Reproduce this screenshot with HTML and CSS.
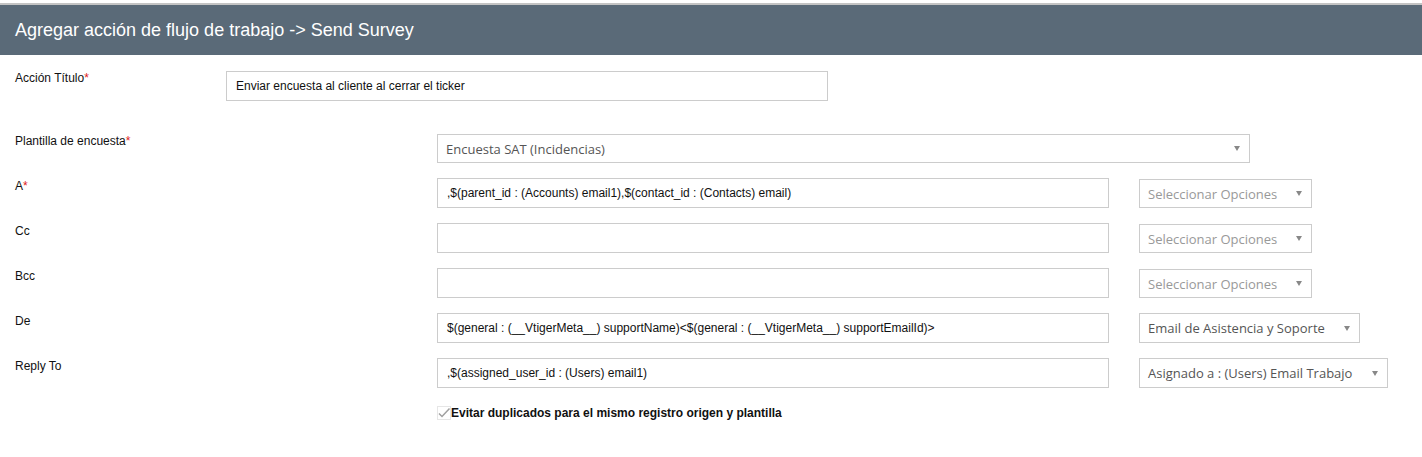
FILE: index.html
```html
<!DOCTYPE html>
<html lang="es">
<head>
<meta charset="utf-8">
<title>Agregar acción de flujo de trabajo</title>
<link rel="stylesheet" href="styles.css">
</head>
<body>
<div class="topline"></div>
<div class="header">Agregar acción de flujo de trabajo -&gt; Send Survey</div>
<div class="form">
  <div class="row row-title">
    <div class="label label-short">Acción Título<span class="req">*</span></div>
    <div class="input input-title">Enviar encuesta al cliente al cerrar el ticker</div>
  </div>

  <div class="row row-tpl">
    <div class="label">Plantilla de encuesta<span class="req">*</span></div>
    <div class="select select-tpl"><span class="sel-text">Encuesta SAT (Incidencias)</span><span class="arrow"></span></div>
  </div>

  <div class="row">
    <div class="label">A<span class="req">*</span></div>
    <div class="input input-main">,$(parent_id : (Accounts) email1),$(contact_id : (Contacts) email)</div>
    <div class="select select-opt"><span class="sel-text placeholder">Seleccionar Opciones</span><span class="arrow"></span></div>
  </div>

  <div class="row">
    <div class="label">Cc</div>
    <div class="input input-main"></div>
    <div class="select select-opt"><span class="sel-text placeholder">Seleccionar Opciones</span><span class="arrow"></span></div>
  </div>

  <div class="row">
    <div class="label">Bcc</div>
    <div class="input input-main"></div>
    <div class="select select-opt"><span class="sel-text placeholder">Seleccionar Opciones</span><span class="arrow"></span></div>
  </div>

  <div class="row">
    <div class="label">De</div>
    <div class="input input-main">$(general : (__VtigerMeta__) supportName)&lt;$(general : (__VtigerMeta__) supportEmailId)&gt;</div>
    <div class="select select-from"><span class="sel-text">Email de Asistencia y Soporte</span><span class="arrow"></span></div>
  </div>

  <div class="row">
    <div class="label">Reply To</div>
    <div class="input input-main">,$(assigned_user_id : (Users) email1)</div>
    <div class="select select-reply"><span class="sel-text">Asignado a : (Users) Email Trabajo</span><span class="arrow"></span></div>
  </div>

  <div class="check-row">
    <svg class="check" width="14" height="14" viewBox="0 0 14 14">
      <rect x="0.5" y="0.5" width="13" height="13" fill="#fff" stroke="#e6e6e6"/>
      <path d="M2 7.5 L5 10.5 L12.5 2.5" fill="none" stroke="#a0a0a0" stroke-width="1.5"/>
    </svg>
    <span class="check-label">Evitar duplicados para el mismo registro origen y plantilla</span>
  </div>
</div>
</body>
</html>
```

FILE: styles.css
```css
* { box-sizing: border-box; }

body {
  margin: 0;
  background: #ffffff;
  font-family: "Liberation Sans", Arial, sans-serif;
  font-size: 12px;
  color: #111;
}

.topline {
  height: 5px;
  background: #ffffff;
  border-bottom: 2px solid #c4c4c4;
}

.header {
  height: 50px;
  background: #5a6a78;
  color: #ffffff;
  font-size: 18px;
  padding: 0 15px;
  display: flex;
  align-items: center;
}

.form {
  padding: 16px 0 0 15px;
}

.row {
  display: flex;
  align-items: flex-start;
  height: 30px;
  margin-bottom: 15px;
}

.row-title {
  margin-bottom: 33px;
}

.row-tpl {
  margin-bottom: 14px;
}

.label {
  width: 422px;
  flex: none;
  padding-top: 1px;
  font-size: 12px;
  line-height: 14px;
  color: #111;
}

.label-short {
  width: 211px;
}

.row-title .label,
.row-tpl .label {
  padding-top: 0;
}

.req {
  color: #e02020;
}

.input {
  height: 30px;
  border: 1px solid #cccccc;
  background: #fff;
  padding: 0 9px;
  display: flex;
  align-items: center;
  font-size: 12px;
  color: #111;
  white-space: nowrap;
  overflow: hidden;
}

.input-title {
  width: 602px;
}

.input-main {
  width: 672px;
  margin-right: 30px;
}

.select {
  height: 30px;
  border: 1px solid #cccccc;
  background: #fff;
  display: flex;
  align-items: center;
  justify-content: space-between;
  padding: 0 9px 0 8px;
  font-family: "Open Sans", "Liberation Sans", sans-serif;
  font-size: 13px;
  color: #555;
  white-space: nowrap;
}

.row-tpl .select {
  height: 29px;
}

.select-tpl { width: 813px; }
.select-opt { width: 173px; margin-top: 1px; height: 29px; }
.select-from { width: 221px; }
.select-reply { width: 249px; }

.placeholder {
  color: #999;
}

.arrow {
  width: 0;
  height: 0;
  border-left: 3px solid transparent;
  border-right: 3px solid transparent;
  border-top: 5px solid #888;
  margin-left: 8px;
  flex: none;
}

.check-row {
  display: flex;
  align-items: center;
  padding-left: 422px;
  margin-top: 18px;
}

.check {
  display: block;
  flex: none;
}

.check-label {
  font-weight: bold;
  font-size: 12px;
  color: #111;
}
```
